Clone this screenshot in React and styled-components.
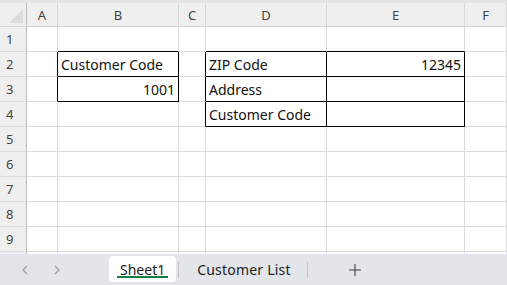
import styled, { createGlobalStyle } from 'styled-components';

const GlobalStyle = createGlobalStyle`
  html, body {
    margin: 0;
    padding: 0;
    background: #ffffff;
    overflow: hidden;
  }
  body {
    font-family: "Noto Sans", "Liberation Sans", sans-serif;
  }
`;

const Window = styled.div`
  display: flex;
  flex-direction: column;
  width: 507px;
  height: 285px;
  overflow: hidden;
  background: #e6e6e6;
  padding-top: 3px;
  box-sizing: border-box;
`;

const Sheet = styled.div`
  flex: 1;
  display: grid;
  grid-template-columns: 27px 31px 121px 27px 121px 138px 1fr;
  grid-template-rows: 24px repeat(10, 25px);
  overflow: hidden;
  background: #ffffff;
`;

const Corner = styled.div`
  position: relative;
  background: #efefef;
  border-right: 1px solid #bcbcbc;
  border-bottom: 1px solid #d4d4d4;
  box-sizing: border-box;

  &::after {
    content: '';
    position: absolute;
    right: 3px;
    bottom: 3px;
    width: 0;
    height: 0;
    border-left: 14px solid transparent;
    border-bottom: 14px solid #dcdcdc;
  }
`;

const ColHead = styled.div`
  display: flex;
  align-items: center;
  justify-content: center;
  background: #efefef;
  border-right: 1px solid #d8d8d8;
  border-bottom: 1px solid #d4d4d4;
  box-sizing: border-box;
  color: #444;
  font-size: 13px;
`;

const RowHead = styled.div`
  display: flex;
  align-items: center;
  padding-left: 6px;
  background: #efefef;
  border-right: 1px solid #bcbcbc;
  border-bottom: 1px solid #dcdcdc;
  box-sizing: border-box;
  color: #444;
  font-size: 13px;
`;

const Cell = styled.div`
  display: flex;
  align-items: center;
  justify-content: ${(p) => (p.$align === 'right' ? 'flex-end' : 'flex-start')};
  padding: 0 3px 0 3px;
  border-right: 1px solid ${(p) => (p.$r ? '#000' : '#dcdcdc')};
  border-bottom: 1px solid ${(p) => (p.$b ? '#000' : '#dcdcdc')};
  box-sizing: border-box;
  color: #111;
  font-size: 14px;
  white-space: nowrap;
  overflow: hidden;
`;

const TabBar = styled.div`
  height: 31px;
  flex-shrink: 0;
  display: flex;
  align-items: stretch;
  background: #e2e5e9;
`;

const NavArea = styled.div`
  display: flex;
  align-items: center;
  width: 109px;
  padding-left: 19px;
  gap: 20px;
  box-sizing: border-box;
`;

const NavButton = styled.span`
  display: flex;
  width: 12px;
  height: 12px;
`;

const Tab = styled.div`
  position: relative;
  display: flex;
  align-items: center;
  justify-content: center;
  margin: 2px 0 3px 0;
  padding: 0 ${(p) => (p.$active ? '11px' : '16px')};
  background: ${(p) => (p.$active ? '#ffffff' : 'transparent')};
  border-radius: 4px;
  color: #222;
  font-size: 14px;
  letter-spacing: ${(p) => (p.$active ? '0' : '0.2px')};
  ${(p) =>
    p.$active &&
    `
    &::after {
      content: '';
      position: absolute;
      left: 8px;
      right: 8px;
      bottom: 4px;
      height: 2px;
      background: #137e43;
    }
  `}
`;

const Divider = styled.span`
  align-self: center;
  width: 1px;
  height: 16px;
  margin: 0 ${(p) => p.$gap || 0}px;
  background: #c4c8cc;
`;

const AddButton = styled.span`
  display: flex;
  align-items: center;
  justify-content: center;
  width: 94px;
  color: #444;
`;

const Chevron = ({ dir }) => (
  <svg width="12" height="12" viewBox="0 0 12 12" fill="none">
    <path
      d={dir === 'left' ? 'M8 2 L4 6 L8 10' : 'M4 2 L8 6 L4 10'}
      stroke="#9a9a9a"
      strokeWidth="1.2"
    />
  </svg>
);

const cols = ['A', 'B', 'C', 'D', 'E', 'F'];

// cell content and black edges (right / bottom) keyed by "col+row"
const cells = {
  B1: { b: true },
  A2: { r: true },
  A3: { r: true },
  B2: { text: 'Customer Code', r: true, b: true },
  B3: { text: '1001', align: 'right', r: true, b: true },
  D1: { b: true },
  E1: { b: true },
  C2: { r: true },
  C3: { r: true },
  C4: { r: true },
  D2: { text: 'ZIP Code', r: true, b: true },
  E2: { text: '12345', align: 'right', r: true, b: true },
  D3: { text: 'Address', r: true, b: true },
  E3: { r: true, b: true },
  D4: { text: 'Customer Code', r: true, b: true },
  E4: { r: true, b: true },
};

export default function App() {
  const rows = Array.from({ length: 10 }, (_, i) => i + 1);

  return (
    <>
      <GlobalStyle />
      <Window>
        <Sheet>
          <Corner />
          {cols.map((c) => (
            <ColHead key={c}>{c}</ColHead>
          ))}
          {rows.map((r) => [
            <RowHead key={`h${r}`}>{r}</RowHead>,
            ...cols.map((c) => {
              const d = cells[c + r] || {};
              return (
                <Cell key={c + r} $r={d.r} $b={d.b} $align={d.align}>
                  {d.text}
                </Cell>
              );
            }),
          ])}
        </Sheet>
        <TabBar>
          <NavArea>
            <NavButton>
              <Chevron dir="left" />
            </NavButton>
            <NavButton>
              <Chevron dir="right" />
            </NavButton>
          </NavArea>
          <Tab $active>Sheet1</Tab>
          <Divider $gap={2} />
          <Tab>Customer List</Tab>
          <Divider />
          <AddButton>
            <svg width="14" height="14" viewBox="0 0 14 14">
              <path d="M7 1 V13 M1 7 H13" stroke="#444" strokeWidth="1.1" />
            </svg>
          </AddButton>
        </TabBar>
      </Window>
    </>
  );
}
